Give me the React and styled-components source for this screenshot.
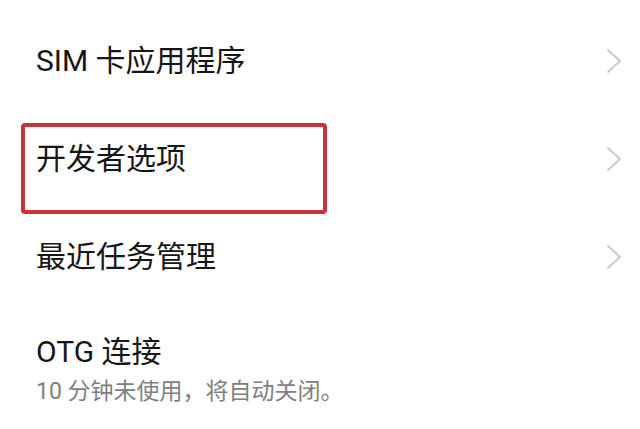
import React from "react"
import styled, { createGlobalStyle } from "styled-components"

const Global = createGlobalStyle`
  html, body {
    margin: 0;
    padding: 0;
    background: #ffffff;
  }
  body {
    font-family: Roboto, "Noto Sans CJK SC", "Noto Sans", sans-serif;
  }
`

const List = styled.div`
  width: 640px;
  height: 429px;
  padding-top: 12px;
  box-sizing: border-box;
  overflow: hidden;
  background: #ffffff;
`

const Row = styled.div`
  position: relative;
  display: flex;
  align-items: center;
  justify-content: space-between;
  height: ${p => p.height || 98}px;
  padding: 0 16px 0 36px;
  box-sizing: border-box;
`

const Texts = styled.div`
  display: flex;
  flex-direction: column;
  padding-top: 6px;
`

const Title = styled.div`
  font-size: 30px;
  line-height: 40px;
  color: #161616;
`

const Subtitle = styled.div`
  font-size: 23px;
  line-height: 30px;
  color: #7f7f7f;
  margin-top: 5px;
`

// annotation box drawn over the row
const Highlight = styled.div`
  position: absolute;
  left: 21px;
  top: 13px;
  width: 306px;
  height: 91px;
  box-sizing: border-box;
  border: 4px solid #c8333a;
  border-radius: 4px;
  pointer-events: none;
`

const Chevron = () => (
  <svg width="18" height="26" viewBox="0 0 18 26" fill="none">
    <path d="M2 2 L14 13 L2 24" stroke="#c9c9c9" strokeWidth="2" strokeLinecap="round" strokeLinejoin="round" />
  </svg>
)

const items = [
  { title: "SIM 卡应用程序", arrow: true },
  { title: "开发者选项", arrow: true, marked: true },
  { title: "最近任务管理", arrow: true },
]

export default function App() {
  return (
    <>
      <Global />
      <List>
        {items.map(item => (
          <Row key={item.title}>
            <Title>{item.title}</Title>
            {item.arrow && <Chevron />}
            {item.marked && <Highlight />}
          </Row>
        ))}
        <Row height={120}>
          <Texts>
            <Title>OTG 连接</Title>
            <Subtitle>10 分钟未使用，将自动关闭。</Subtitle>
          </Texts>
        </Row>
      </List>
    </>
  )
}
